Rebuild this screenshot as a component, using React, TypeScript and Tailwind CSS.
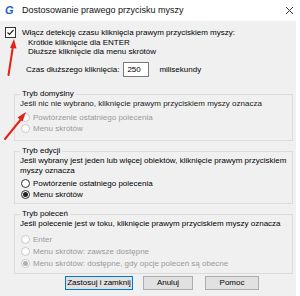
import React from "react";

const Radio = ({ checked = false, disabled = false }: { checked?: boolean; disabled?: boolean }) => (
  <span
    className={`flex h-[9px] w-[9px] shrink-0 items-center justify-center rounded-full border bg-white ${
      disabled ? "border-[#c8c8c8]" : "border-[#333]"
    }`}
  >
    {checked && (
      <span className={`h-[5px] w-[5px] rounded-full ${disabled ? "bg-[#b0b0b0]" : "bg-[#222]"}`} />
    )}
  </span>
);

const RadioRow = ({
  label,
  checked,
  disabled,
}: {
  label: string;
  checked?: boolean;
  disabled?: boolean;
}) => (
  <div className="flex h-[11px] items-center gap-[3px] pl-[1px]">
    <Radio checked={checked} disabled={disabled} />
    <span className={disabled ? "text-[#9a9a9a]" : "text-black"}>{label}</span>
  </div>
);

const Group = ({ title, children, className = "" }: { title: string; children: React.ReactNode; className?: string }) => (
  <fieldset className={`mx-[14px] w-[279px] border border-[#dcdcdc] px-[5px] ${className}`}>
    <legend className="px-[2px] leading-[10px]">{title}</legend>
    {children}
  </fieldset>
);

export default function App() {
  return (
    <div
      className="relative h-[296px] w-[300px] overflow-hidden bg-white text-[8px] text-black"
      style={{ fontFamily: '"Liberation Sans", Arial, sans-serif' }}
    >
      {/* title bar */}
      <div className="flex h-[21px] items-center pl-[5px] pr-[6px]">
        <span className="w-[17px] text-[11px] font-black italic leading-none text-[#1f5fc4]">G</span>
        <span className="text-[9px] text-[#111]">Dostosowanie prawego przycisku myszy</span>
        <svg className="ml-auto" width="9" height="9" viewBox="0 0 9 9">
          <path d="M1 1L8 8M8 1L1 8" stroke="#333" strokeWidth="1" />
        </svg>
      </div>

      {/* body */}
      <div className="h-[275px] w-[296px] bg-[#f0f0f0] pt-[6px]">
        <div className="flex h-[11px] items-center pl-[5px]">
          <svg width="11" height="11" viewBox="0 0 11 11" className="shrink-0">
            <rect x="0.5" y="0.5" width="10" height="10" fill="white" stroke="#333" />
            <path d="M2.5 5.5L4.5 7.5L8.5 3" fill="none" stroke="#222" strokeWidth="1.2" />
          </svg>
          <span className="ml-[6px]">Włącz detekcję czasu kliknięcia prawym przyciskiem myszy:</span>
        </div>
        <div className="pl-[28px] leading-[9px]">
          <div>Krótkie kliknięcie dla ENTER</div>
          <div>Dłuższe kliknięcie dla menu skrótów</div>
        </div>
        <div className="mt-[6px] flex h-[15px] items-center pl-[26px]">
          <span>Czas dłuższego kliknięcia:</span>
          <span className="ml-[4px] flex h-[15px] w-[26px] items-center border border-[#7a7a7a] bg-white pl-[3px]">
            250
          </span>
          <span className="ml-[10px]">milisekundy</span>
        </div>

        <Group title="Tryb domyślny" className="mt-[12px] pb-[6px]">
          <div className="leading-[10px] text-[#222]">
            Jeśli nic nie wybrano, kliknięcie prawym przyciskiem myszy oznacza
          </div>
          <div className="mt-[3px]">
            <RadioRow label="Powtórzenie ostatniego polecenia" disabled />
            <RadioRow label="Menu skrótów" disabled />
          </div>
        </Group>

        <Group title="Tryb edycji" className="mt-[5px] pb-[3px]">
          <div className="leading-[10px]">
            Jeśli wybrany jest jeden lub więcej obiektów, kliknięcie prawym przyciskiem myszy oznacza
          </div>
          <div className="mt-[2px]">
            <RadioRow label="Powtórzenie ostatniego polecenia" />
            <RadioRow label="Menu skrótów" checked />
          </div>
        </Group>

        <Group title="Tryb poleceń" className="mt-[5px] pb-[4px]">
          <div className="leading-[10px]">Jeśli polecenie jest w toku, kliknięcie prawym przyciskiem myszy oznacza</div>
          <div className="mt-[5px] flex flex-col gap-[1px]">
            <RadioRow label="Enter" disabled />
            <RadioRow label="Menu skrótów: zawsze dostępne" disabled />
            <RadioRow label="Menu skrótów: dostępne, gdy opcje poleceń są obecne" checked disabled />
          </div>
        </Group>

        <div className="mt-[2px] flex pl-[65px]">
          <button className="h-[14px] w-[68px] border border-[#0078d7] bg-[#e1e1e1] text-[8px] leading-none">
            Zastosuj i zamknij
          </button>
          <button className="ml-[10px] h-[14px] w-[50px] border border-[#adadad] bg-[#e1e1e1] text-[8px] leading-none">
            Anuluj
          </button>
          <button className="ml-[12px] h-[14px] w-[54px] border border-[#adadad] bg-[#e1e1e1] text-[8px] leading-none">
            Pomoc
          </button>
        </div>
      </div>

      {/* red annotation arrows */}
      <svg className="pointer-events-none absolute left-0 top-0" width="300" height="296" viewBox="0 0 300 296">
        <path d="M8.5 75L13 46" stroke="#e2231a" strokeWidth="2" strokeLinecap="round" />
        <path d="M14 39L10 48L16.5 48.5Z" fill="#e2231a" />
        <path d="M5 139L22 118" stroke="#e2231a" strokeWidth="2" strokeLinecap="round" />
        <path d="M26 112L17.5 117.5L22.5 121.5Z" fill="#e2231a" />
      </svg>
    </div>
  );
}
